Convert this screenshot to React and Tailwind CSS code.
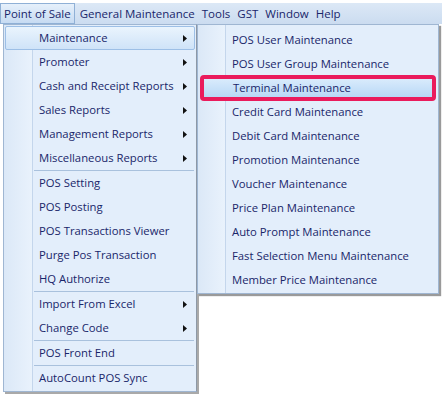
const font = { fontFamily: '"Open Sans", "Noto Sans", sans-serif' };

const mainItems = [
  { label: "Maintenance", sub: true, active: true },
  { label: "Promoter", sub: true },
  { label: "Cash and Receipt Reports", sub: true },
  { label: "Sales Reports", sub: true },
  { label: "Management Reports", sub: true },
  { label: "Miscellaneous Reports", sub: true, sep: true },
  { label: "POS Setting" },
  { label: "POS Posting" },
  { label: "POS Transactions Viewer" },
  { label: "Purge Pos Transaction" },
  { label: "HQ Authorize", sep: true },
  { label: "Import From Excel", sub: true },
  { label: "Change Code", sub: true, sep: true },
  { label: "POS Front End", sep: true },
  { label: "AutoCount POS Sync" },
];

const subItems = [
  "POS User Maintenance",
  "POS User Group Maintenance",
  "Terminal Maintenance",
  "Credit Card Maintenance",
  "Debit Card Maintenance",
  "Promotion Maintenance",
  "Voucher Maintenance",
  "Price Plan Maintenance",
  "Auto Prompt Maintenance",
  "Fast Selection Menu Maintenance",
  "Member Price Maintenance",
];

function Arrow() {
  return (
    <svg width="4" height="7" viewBox="0 0 4 7" className="shrink-0">
      <path d="M0 0 L4 3.5 L0 7 Z" fill="#111" />
    </svg>
  );
}

function MainMenu() {
  return (
    <div className="relative ml-[3px] w-[194px] border border-[#9fb6d2] border-r-[#8d98a6] bg-[#e3eefb] shadow-[2px_2px_0_#a9a9a9]">
      <div className="absolute left-0 top-0 bottom-0 w-[29px] border-r border-r-[#c4d6ec] bg-gradient-to-r from-[#dbe8f7] to-[#e9f2fc]" />
      <div className="relative flex flex-col py-[1px]">
        {mainItems.map((it) => (
          <div key={it.label}>
            <div
              className={
                it.active
                  ? "mx-[1px] flex h-[24px] items-center rounded-[2px] border border-[#9dbfe6] bg-gradient-to-b from-[#eaf4fd] to-[#cfe3f8] pl-[33px] pr-[7px]"
                  : "mx-[1px] flex h-[24px] items-center border border-transparent pl-[33px] pr-[7px]"
              }
            >
              <span className="flex-1 text-[11.3px] text-[#19266a]">{it.label}</span>
              {it.sub && <Arrow />}
            </div>
            {it.sep && <div className="ml-[30px] mr-[2px] h-[1px] bg-[#a9c1dd]" />}
          </div>
        ))}
      </div>
    </div>
  );
}

function SubMenu() {
  return (
    <div className="relative w-[242px] border border-[#9fb6d2] bg-[#e3eefb] shadow-[2px_2px_1px_#9a9a9a]">
      <div className="absolute left-0 top-0 bottom-0 w-[28px] border-r border-r-[#c4d6ec] bg-gradient-to-r from-[#dbe8f7] to-[#e9f2fc]" />
      <div className="relative flex flex-col pt-[3px] pb-[1px]">
        {subItems.map((s, i) =>
          i === 2 ? (
            <div
              key={s}
              className="mx-[2px] -my-[1px] flex h-[26px] items-center rounded-[4px] border-[4px] border-[#ea1b5c] bg-gradient-to-b from-[#d9ebfc] to-[#b8d8f6] pl-[29px]"
            >
              <span className="text-[11.3px] text-[#19266a]">{s}</span>
            </div>
          ) : (
            <div key={s} className="flex h-[24px] items-center pl-[34px]">
              <span className="text-[11.3px] text-[#19266a]">{s}</span>
            </div>
          )
        )}
      </div>
    </div>
  );
}

export default function App() {
  const bar = ["General Maintenance", "Tools", "GST", "Window", "Help"];
  return (
    <div className="h-[397px] w-[442px] overflow-hidden bg-white" style={font}>
      <div className="mt-[3px] flex h-[21px] items-stretch gap-[1px] bg-gradient-to-b from-[#dce8f6] to-[#cbdcf0]">
        <div className="mr-[1px] flex items-center border border-[#8fb0d6] bg-gradient-to-b from-[#e6f0fb] to-[#c7dbf2] px-[3px] text-[11.5px] text-[#19266a]">
          Point of Sale
        </div>
        {bar.map((b) => (
          <div key={b} className="flex items-center px-[3px] text-[11.5px] text-[#19266a]">
            {b}
          </div>
        ))}
      </div>
      <div className="flex items-start">
        <MainMenu />
        <SubMenu />
      </div>
    </div>
  );
}
